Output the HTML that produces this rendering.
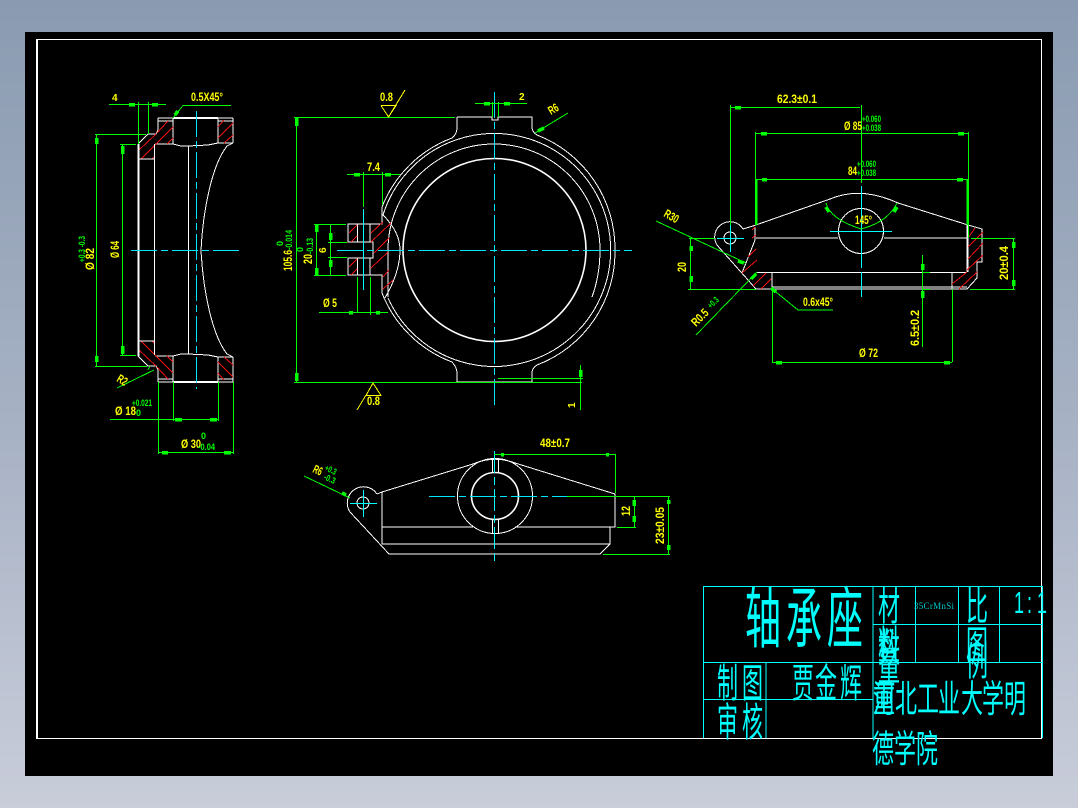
<!DOCTYPE html>
<html lang="zh">
<head>
<meta charset="utf-8">
<title>轴承座</title>
<style>
html,body{margin:0;padding:0;width:1078px;height:808px;overflow:hidden;background:linear-gradient(180deg,#8a9bb1 0%,#a5b0c3 50%,#c9cdda 100%);}
#s{position:absolute;left:25px;top:32px;width:1028px;height:744px;background:#000;overflow:hidden;}
svg{position:absolute;left:-25px;top:-32px;}
line,path,polyline,rect,circle{fill:none;}
.w{stroke:#fff;stroke-width:1;shape-rendering:crispEdges;}
.w2{stroke:#fff;stroke-width:2;shape-rendering:crispEdges;}
.w3{stroke:#fff;stroke-width:1.6;}
.r{stroke:#f01010;stroke-width:1;shape-rendering:crispEdges;}
.g{stroke:#00ff00;stroke-width:1;shape-rendering:crispEdges;}
.g2{stroke:#00ff00;stroke-width:2;shape-rendering:crispEdges;}
.a{stroke:#00ff00;stroke-width:3.5;shape-rendering:crispEdges;}
.c{stroke:#00ffff;stroke-width:1;shape-rendering:crispEdges;}
.cl{stroke:#00ffff;stroke-width:1;shape-rendering:crispEdges;}
.ca{stroke:#00e6ff;stroke-width:1;stroke-dasharray:26 4 7 4;shape-rendering:crispEdges;}
.y{stroke:#ffff00;stroke-width:1;shape-rendering:crispEdges;}
text{font-family:"Liberation Sans",sans-serif;}
.ty{fill:#ffff00;font-size:12px;font-weight:bold;}
.ts{fill:#ffff00;font-size:10px;font-weight:bold;}
.tg{fill:#00ff00;font-size:9px;font-weight:bold;}
.cj{fill:#00ffff;font-family:"Liberation Sans","Noto Sans CJK SC",sans-serif;}
</style>
</head>
<body>
<div id="s">
<svg width="1078" height="808" viewBox="0 0 1078 808" xmlns="http://www.w3.org/2000/svg">
<defs>
<g id="lh">
<path class="w" d="M158 118H233M158 121H173M218 121H233M158 118V130L156 134H148L138 144M155 144H173M173 118V144M173 144L181 146H188L208 145L218 143H233M218 118V143M233 118V143"/>
<path class="r" d="M138 151L156 134M141 159L173 127M157 133L168 121M167 144L173 138M152 159L155 156M218 127L224 120M218 138L233 123M224 143L233 135"/>
<path class="w" d="M138 159H154"/>
<path class="w" d="M233 143L227 146C212 165 203 210 201 250"/>
</g>
</defs>

<!-- frame -->
<rect class="w" x="36.5" y="39.5" width="1005" height="699"/>
<line class="w" x1="37.5" y1="39" x2="37.5" y2="738"/>

<!-- LEFT VIEW -->
<use href="#lh"/>
<use href="#lh" transform="matrix(1 0 0 -1 0 500)"/>
<path class="w2" d="M138.5 144V356"/>
<path class="w" d="M154.5 144V355M188.5 146V354"/>
<path class="w2" d="M173 118H218M173 382H218"/>
<line class="ca" x1="131" y1="250.5" x2="243" y2="250.5"/>
<line class="ca" x1="196.5" y1="111" x2="196.5" y2="389"/>
<!-- left dims -->
<path class="g" d="M109 104.5H166M138.5 102V144M148.5 102V134M95 134.5H146M95 366.5H147M96.5 134V366M120 144.5H136M120 355.5H136M122.5 144V355"/>
<path class="a" d="M129 104.5H135M152 104.5H158M96.5 138V144M96.5 356V362M122.5 146V154M122.5 346V354M175 419.5H182M210 419.5H217M162 452.5H168M224 452.5H231"/>
<path class="g" d="M183 105.5H231M183 105.5L173 118M117 388L154 370M148 370L150 366M110 419.5H218M173.5 382V421M218.5 382V421M158.5 382V454M233.5 382V454M158 452.5H234"/>
<path class="a" d="M178 111L175 115"/>
<text class="ts" x="112" y="101">4</text>
<text class="ty" x="191" y="101" textLength="32" lengthAdjust="spacingAndGlyphs">0.5X45°</text>
<text class="ty" transform="rotate(-90 94 270)" x="94" y="270" textLength="22" lengthAdjust="spacingAndGlyphs">Ø 82</text>
<text class="tg" transform="rotate(-90 85 262)" x="85" y="262" textLength="26" lengthAdjust="spacingAndGlyphs">+0.3  -0.3</text>
<text class="ty" transform="rotate(-90 119 258)" x="119" y="258" textLength="17" lengthAdjust="spacingAndGlyphs">Ø 64</text>
<text class="ty" transform="rotate(30 116 381)" x="116" y="381" textLength="10" lengthAdjust="spacingAndGlyphs">R2</text>
<text class="ty" x="115" y="415" textLength="21" lengthAdjust="spacingAndGlyphs">Ø 18</text>
<text class="tg" x="132" y="406" textLength="20" lengthAdjust="spacingAndGlyphs">+0.021</text>
<text class="tg" x="136" y="416">0</text>
<text class="ty" x="181" y="448" textLength="20" lengthAdjust="spacingAndGlyphs">Ø 30</text>
<text class="tg" x="201" y="439">0</text>
<text class="tg" x="198" y="450" textLength="17" lengthAdjust="spacingAndGlyphs">-0.04</text>

<!-- CENTER VIEW -->
<path class="w" d="M457 117H492V120H498V117H532V128Q532.5 132 537 135A122 122 0 0 1 615 250A121 121 0 0 1 537 365Q532.5 368 532 372V382H457V372Q456.5 367 452 362A121 121 0 0 1 382 293M452 138Q457 134 457 128V117"/>
<path class="w" d="M452 138A121 121 0 0 0 382 207"/>
<path class="w" d="M383 215A116.5 116.5 0 1 1 388 298"/>
<path class="w" d="M388 297V250A106 106 0 0 1 600 250Q600 275 592 297"/>
<circle class="w3" cx="494.5" cy="250" r="91.5"/>
<path class="w" d="M383 215Q400 232 400 250Q400 272 385 298"/>
<path class="w" d="M382 207V224H348V242H373V258H348V275H382V293M357.5 224V242M370 224V242M357.5 258V275M370 258V275"/>
<path class="r" d="M349 233L357 225M351 242L357 236M371 233L383 222M371 242L391 223M374 253L389 238M371 268L388 252M383 277L389 270M383 289L393 280M349 267L357 259M351 275L357 269"/>
<line class="ca" x1="337" y1="250.5" x2="632" y2="250.5"/>
<line class="ca" x1="494.5" y1="92" x2="494.5" y2="408"/>
<line class="c" x1="363.5" y1="209" x2="363.5" y2="290"/>
<!-- center dims -->
<path class="g" d="M294 117.5H455M294 382.5H582M296.5 117V382M314 224.5H346M314 275.5H346M316.5 224V275M328 242.5H347M328 257.5H347M330.5 224V275M347 174.5H400M363.5 172V207M382.5 172V205M319 312.5H388M357.5 277V313M370.5 277V315M475 103.5H527M492.5 102V117M498.5 102V117M535 133L568 113M580.5 365V410M498 378.5H583"/>
<path class="a" d="M296.5 118V126M296.5 373V381M316.5 225V232M316.5 268V275M330.5 233V240M330.5 260V267M354 174.5H360M385 174.5H391M349 312.5H353M376 312.5H380M484 103.5H490M504 103.5H510M538 131L544 128M580.5 370V377"/>
<path class="y" d="M381 105.5H396L388.5 117L381 105.5M388.5 117L405 90M366 395.5H381L373 383L366 395.5M366 395L357 410"/>
<text class="ty" x="380" y="101" textLength="13" lengthAdjust="spacingAndGlyphs">0.8</text>
<text class="ty" x="367" y="405" textLength="13" lengthAdjust="spacingAndGlyphs">0.8</text>
<text class="ty" x="367" y="171" textLength="13" lengthAdjust="spacingAndGlyphs">7.4</text>
<text class="ty" x="323" y="307" textLength="14" lengthAdjust="spacingAndGlyphs">Ø 5</text>
<text class="ts" x="519" y="100">2</text>
<text class="ty" transform="rotate(-30 551 115)" x="551" y="115" textLength="10" lengthAdjust="spacingAndGlyphs">R6</text>
<text class="ts" transform="rotate(-90 575 408)" x="575" y="408">1</text>
<text class="ty" transform="rotate(-90 292 271)" x="292" y="271" textLength="21" lengthAdjust="spacingAndGlyphs">105.6</text>
<text class="tg" transform="rotate(-90 292 250)" x="292" y="250" textLength="20" lengthAdjust="spacingAndGlyphs">-0.014</text>
<text class="tg" transform="rotate(-90 283 246)" x="283" y="246">0</text>
<text class="ty" transform="rotate(-90 312 264)" x="312" y="264" textLength="10" lengthAdjust="spacingAndGlyphs">20</text>
<text class="tg" transform="rotate(-90 313 254)" x="313" y="254" textLength="16" lengthAdjust="spacingAndGlyphs">-0.13</text>
<text class="tg" transform="rotate(-90 303 252)" x="303" y="252">0</text>
<text class="ts" transform="rotate(-90 326 253)" x="326" y="253">6</text>

<!-- RIGHT VIEW -->
<path class="w" d="M743 229L753 226L830 199Q861 186 898 203L968 225L982 229V262H977V278L967 289H756L724 253L717 245A15 15 0 1 1 743 229"/>
<circle class="w" cx="730" cy="238" r="6"/>
<path class="w" d="M755 227V240L742 273M756 238H838M884 238H967M757 272.5H967M772 272V288M772 287H967M952 273V289"/>
<path class="w2" d="M967.5 225V272"/>
<circle class="w" cx="861" cy="231" r="22.5"/>
<path class="r" d="M968 238L975 228M968 247L983 232M968 259L983 243M967 270L983 255M952 284L967 272M959 289L977 272M752 238L756 235M748 257L756 249M742 273L757 260M753 286L766 273M761 289L771 279M752 230L755 227"/>
<line class="cl" x1="861.5" y1="186" x2="861.5" y2="268"/>
<line class="cl" x1="861.5" y1="272" x2="861.5" y2="297"/>
<line class="cl" x1="830" y1="231.5" x2="892" y2="231.5"/>
<path class="c" d="M717 238.5H744M730.5 225V252"/>
<!-- right dims -->
<path class="g" d="M730 107.5H860M730.5 105V225M755 133.5H968M755.5 132V225M756 179.5H967M968.5 132V238M861.5 105V183M656 221L746 263M689 238.5H715M688 289.5H756M690.5 238V289M696 335L757 272M771 288L798 310H833M772.5 288V362M952.5 289V362M772 362.5H952M922.5 255V347M922 272.5H930M922 289.5H930M971 238.5H1015M970 289.5H1015M1013.5 238V289M826 203Q830 219 861 229Q888 222 897 203"/>
<path class="g2" d="M756.5 179V225M967.5 179V225"/>
<path class="a" d="M735 107.5H741M761 133.5H767M762 179.5H767M958 133.5H964M957 179.5H963M691 246V251M691 276V282M738 261L744 263M756 274L751 279M776 292L771 288M776 362.5H782M944 362.5H950M922.5 264V270M922.5 291V298M1013.5 242V248M1013.5 280V286M897 207L894 212M826 207L829 212"/>
<text class="ty" x="777" y="103" textLength="40" lengthAdjust="spacingAndGlyphs">62.3±0.1</text>
<text class="ty" x="844" y="130" textLength="18" lengthAdjust="spacingAndGlyphs">Ø 85</text>
<text class="tg" x="862" y="122" textLength="19" lengthAdjust="spacingAndGlyphs">+0.060</text>
<text class="tg" x="862" y="131" textLength="19" lengthAdjust="spacingAndGlyphs">+0.038</text>
<text class="ty" x="848" y="175" textLength="9" lengthAdjust="spacingAndGlyphs">84</text>
<text class="tg" x="857" y="167" textLength="19" lengthAdjust="spacingAndGlyphs">+0.060</text>
<text class="tg" x="857" y="176" textLength="19" lengthAdjust="spacingAndGlyphs">+0.038</text>
<text class="ty" x="855" y="224" textLength="17" lengthAdjust="spacingAndGlyphs">145°</text>
<text class="ty" transform="rotate(30 663 216)" x="663" y="216" textLength="15" lengthAdjust="spacingAndGlyphs">R30</text>
<text class="ty" transform="rotate(-90 686 272)" x="686" y="272" textLength="10" lengthAdjust="spacingAndGlyphs">20</text>
<text class="ty" transform="rotate(-45 696 327)" x="696" y="327" textLength="19" lengthAdjust="spacingAndGlyphs">R0.5</text>
<text class="tg" transform="rotate(-45 711 309)" x="711" y="309" textLength="12" lengthAdjust="spacingAndGlyphs">+0.3</text>
<text class="ty" x="803" y="306" textLength="30" lengthAdjust="spacingAndGlyphs">0.6x45°</text>
<text class="ty" x="859" y="357" textLength="19" lengthAdjust="spacingAndGlyphs">Ø 72</text>
<text class="ty" transform="rotate(-90 919 346)" x="919" y="346" textLength="36" lengthAdjust="spacingAndGlyphs">6.5±0.2</text>
<text class="ty" transform="rotate(-90 1008 280)" x="1008" y="280" textLength="34" lengthAdjust="spacingAndGlyphs">20±0.4</text>

<!-- BOTTOM VIEW -->
<path class="w" d="M377 494L382 492L473 464Q494 455 515 463L615 494V527H515M473 527H382M382 492V544H610V527M610 544L600 554H389L350 512A15 15 0 1 1 377 494"/>
<circle class="w" cx="363" cy="503" r="6"/>
<circle class="w" cx="495" cy="496" r="37.5"/>
<circle class="w3" cx="495" cy="496" r="23.5"/>
<path class="w" d="M492.5 458V473M498.5 458V473M492.5 519V533M498.5 519V533"/>
<line class="ca" x1="429" y1="496.5" x2="567" y2="496.5"/>
<line class="cl" x1="494.5" y1="451" x2="494.5" y2="561" stroke-dasharray="22 4 8 4"/>
<path class="c" d="M350 503.5H377M363.5 490V517"/>
<path class="g" d="M494 454.5H615M615.5 454V493M567 496.5H670M617 527.5H636M634.5 496V527M603 554.5H670M668.5 496V554M304 476L350 498"/>
<path class="a" d="M501 454.5H504M606 454.5H609M634 500V506M634 516V522M668.5 500V504M668.5 545V550M342 493L346 495"/>
<text class="ty" x="540" y="447" textLength="30" lengthAdjust="spacingAndGlyphs">48±0.7</text>
<text class="ty" transform="rotate(-90 630 516)" x="630" y="516" textLength="10" lengthAdjust="spacingAndGlyphs">12</text>
<text class="ty" transform="rotate(-90 664 544)" x="664" y="544" textLength="37" lengthAdjust="spacingAndGlyphs">23±0.05</text>
<text class="ty" transform="rotate(25 312 472)" x="312" y="472" textLength="9" lengthAdjust="spacingAndGlyphs">R6</text>
<text class="tg" transform="rotate(25 324 470)" x="324" y="470" textLength="12" lengthAdjust="spacingAndGlyphs">+0.3</text>
<text class="tg" transform="rotate(25 323 479)" x="323" y="479" textLength="12" lengthAdjust="spacingAndGlyphs">-0.3</text>

<!-- TITLE BLOCK -->
<path class="c" d="M703.5 586.5H1042.5V738M703.5 586V738M873 586V738M915.5 586V662M958.5 586V662M999.5 586V662M873 624.5H1042M703 662.5H1042M703 699.5H873M766 662V738"/>

<g class="cj">
<text transform="translate(745 642) scale(1 1.85)" font-size="36">轴</text>
<text transform="translate(786 642) scale(1 1.85)" font-size="36">承</text>
<text transform="translate(827 642) scale(1 1.85)" font-size="36">座</text>

<text transform="translate(717 697) scale(1 1.9)" font-size="21">制</text>
<text transform="translate(742 697) scale(1 1.9)" font-size="21">图</text>
<text transform="translate(717 736) scale(1 1.9)" font-size="21">审</text>
<text transform="translate(742 736) scale(1 1.9)" font-size="21">核</text>

<text transform="translate(792 697) scale(1 1.8)" font-size="22">贾</text>
<text transform="translate(815 697) scale(1 1.8)" font-size="22">金</text>
<text transform="translate(840 697) scale(1 1.8)" font-size="22">辉</text>

<text transform="translate(878 620) scale(1 1.8)" font-size="22">材</text>
<text transform="translate(878 659) scale(1 1.8)" font-size="22">料</text>
<text transform="translate(878 662) scale(1 1.8)" font-size="22">数</text>
<text transform="translate(878 680) scale(1 1.8)" font-size="22">量</text>

<text transform="translate(966 620) scale(1 1.8)" font-size="22">比</text>
<text transform="translate(966 659) scale(1 1.8)" font-size="22">图</text>
<text transform="translate(966 675) scale(1 1.8)" font-size="22">例</text>

<text transform="translate(873 712) scale(1 1.7)" font-size="22">河</text>
<text transform="translate(873 712) scale(1 1.7)" font-size="22">重</text>
<text transform="translate(895 712) scale(1 1.7)" font-size="22">北</text>
<text transform="translate(917 712) scale(1 1.7)" font-size="22">工</text>
<text transform="translate(938 712) scale(1 1.7)" font-size="22">业</text>
<text transform="translate(961 712) scale(1 1.7)" font-size="22">大</text>
<text transform="translate(982 712) scale(1 1.7)" font-size="22">学</text>
<text transform="translate(1004 712) scale(1 1.7)" font-size="22">明</text>

<text transform="translate(872 762) scale(1 1.7)" font-size="22">德</text>
<text transform="translate(894 762) scale(1 1.7)" font-size="22">学</text>
<text transform="translate(916 762) scale(1 1.7)" font-size="22">院</text>

<text transform="translate(1014 613) scale(1 1.7)" font-size="18" font-family="Liberation Sans">1</text>
<text transform="translate(1027 613) scale(1 1.7)" font-size="18" font-family="Liberation Sans">:</text>
<text transform="translate(1037 613) scale(1 1.7)" font-size="18" font-family="Liberation Sans">1</text>
<text x="914" y="609" font-size="9" textLength="40" lengthAdjust="spacing" style="font-family:'Liberation Serif',serif;fill:#00c8c8">35CrMnSi</text>
</g>
</svg>
</div>
</body>
</html>
